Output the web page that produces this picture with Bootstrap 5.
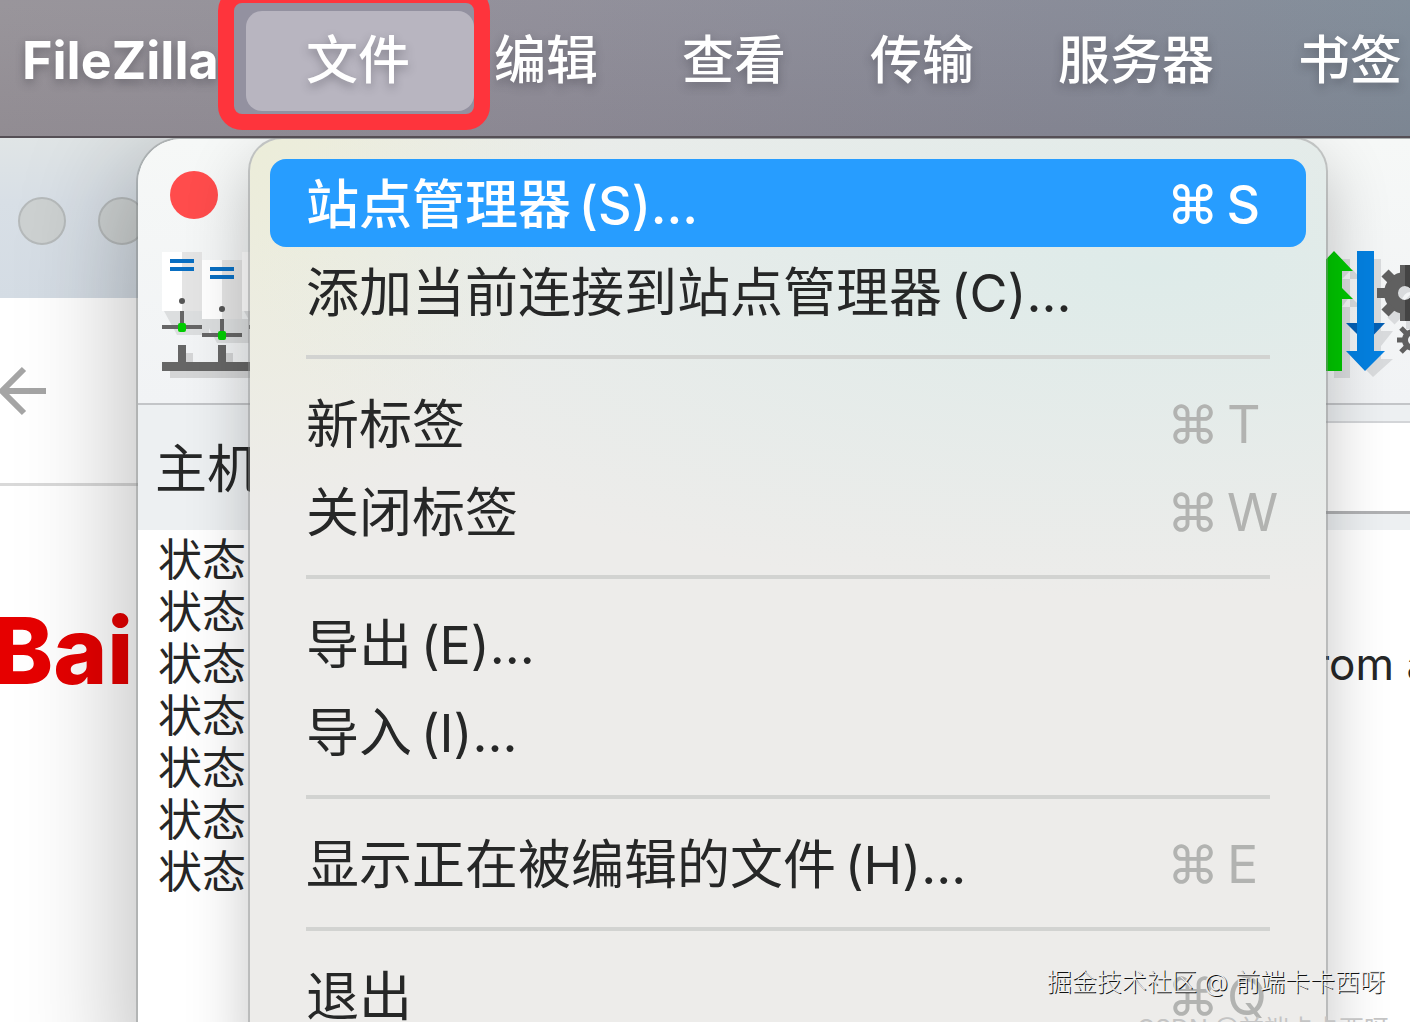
<!DOCTYPE html>
<html lang="zh-CN">
<head>
<meta charset="utf-8">
<meta name="viewport" content="width=device-width, initial-scale=1">
<title>FileZilla</title>
<link href="https://cdn.jsdelivr.net/npm/bootstrap@5.3.0/dist/css/bootstrap.min.css" rel="stylesheet">
<style>
body{font-family:Inter,"Noto Sans CJK SC",sans-serif;color:#262727;background:#fff}
.desk{height:100vh}
.menubar{height:138px;padding:0 0 14px 22px;background:linear-gradient(180deg,rgba(255,255,255,.03),rgba(90,70,80,.08)),linear-gradient(90deg,#969298,#8f8d98 38%,#868996 75%,#7f8b98);border-bottom:2px solid #554f55;z-index:5}
.menubar a{color:#fff;font-size:52px;line-height:78px;font-weight:500;text-shadow:0 4px 10px rgba(40,40,50,.35);white-space:nowrap;text-decoration:none}
.bar-items{gap:84px}
.menubar .app-name{font-weight:700;width:284px;flex:none}
.menubar .picked{position:relative;z-index:0}
.picked::before{content:"";position:absolute;z-index:-1;left:-60px;right:-64px;top:-11px;height:100px;border-radius:16px;background:#b8b5c0}
.marker{position:absolute;z-index:-2;left:-88px;right:-80px;top:-35px;height:143px;border:16px solid #fe343c;border-radius:24px;background:#9391a0;display:block}
.stage{z-index:1}
.web-win{position:absolute;inset:0;background:#fff}
.web-head{height:160px;padding:59px 0 0 18px;gap:32px;background:linear-gradient(180deg,#e0e5e6,#d8dfe6 40%,#d4dce4)}
.dot{width:48px;height:48px;border-radius:50%;background:#cdd1d1;border:2px solid #b6babb}
.dot-close{background:#ff4c4c;border:0}
.web-tools{height:188px;border-bottom:3px solid #d9d9d9}
.web-logo{color:#e60000;font-size:92px;font-weight:800;line-height:90px;margin-left:-8px;padding-top:120px}
.fz-win{position:absolute;left:138px;right:-80px;top:1px;bottom:-40px;border-radius:44px 0 0 0;background:#fff;box-shadow:0 0 0 2px rgba(120,125,125,.4),0 30px 110px 10px rgba(0,0,0,.27);overflow:hidden}
.fz-tools{height:266px;padding:32px 0 0 24px;background:linear-gradient(180deg,#f6f8f7,#f1f3f5);border-bottom:2px solid #c3c5c8}
.fz-icons{margin-top:32px;padding-right:30px}
.fz-host{height:125px;padding-left:17px;background:#edf0f2;gap:30px}
.fz-host label{font-size:52px;white-space:nowrap;padding-top:4px}
.fz-host input{height:93px;border:2px solid #d3d5d8;border-bottom:3px solid #b0b1b3;background:#fff;min-width:0}
.fz-log{padding:4px 0 0 20px;font-size:44px;line-height:52px;list-style:none;margin:0;white-space:nowrap}
.fz-log .msg{margin-left:1051px}
.drop{position:absolute;left:250px;top:1px;width:1076px;padding:20px;border-radius:32px 32px 0 0;background:radial-gradient(ellipse 900px 330px at 900px 130px,#deebe9,rgba(222,235,233,0) 100%),radial-gradient(ellipse 360px 380px at 0 0,#ecedd9,rgba(236,235,224,0) 100%),#edecea;box-shadow:0 0 0 2px rgba(140,142,142,.45),0 24px 64px rgba(0,0,0,.24);z-index:2}
.entry{height:88px;padding:4px 26px 0 36px;border:0;border-radius:16px;background:transparent;color:#262727;font-size:53px;line-height:80px;text-align:left;white-space:nowrap}
.entry.chosen{background:#279dff;color:#fff;font-weight:500}
.latin{font-size:52px;margin-left:-6px}
.entry .keys{width:113px;color:#b2b3b1;font-size:52px;gap:8px;font-weight:400}
.entry.chosen .keys{color:#fff;font-weight:500}
.rule{height:4px;margin:20px 36px;border:0;background:#d2d3d1;opacity:1}
.credit{position:absolute;font-size:25px;line-height:36px;white-space:nowrap;z-index:4}
.credit-a{right:25px;bottom:22px;color:#eee;font-weight:300;text-shadow:1px 1px 0 #111}
.credit-b{right:21px;bottom:-25px;color:#c4c4c4}
</style>
</head>
<body>
<div class="desk d-flex flex-column overflow-hidden position-relative">
<nav class="menubar d-flex align-items-center flex-shrink-0 position-relative" aria-label="菜单栏">
<a href="#" class="app-name">FileZilla</a>
<div class="bar-items d-flex">
<a href="#" class="picked">文件<span class="marker"></span></a><a href="#">编辑</a><a href="#">查看</a><a href="#">传输</a><a href="#">服务器</a><a href="#">书签</a>
</div>
</nav>
<main class="stage flex-grow-1 position-relative">
<section class="web-win">
<div class="web-head d-flex"><span class="dot"></span><span class="dot"></span></div>
<div class="web-tools d-flex align-items-center"><svg width="48" height="50" viewBox="0 0 48 50" fill="none" stroke="#a5a5a5" stroke-width="6"><path d="M46 25H3M24 3L2 25L24 47"/></svg></div>
<div class="web-logo">Bai</div>
</section>
<section class="fz-win">
<div class="fz-tools">
<div class="ms-2 dot dot-close"></div>
<div class="fz-icons d-flex justify-content-between">
<svg width="130" height="130" viewBox="1 0 130 130">
<defs><g id="server">
<path d="M3 60H48V84H16Z" fill="#dcdedf"/>
<path d="M1 1H21V60H1Z" fill="#fff"/><path d="M21 1H41V60H21Z" fill="#e4e4e4"/>
<path d="M9 8H33V12H9ZM9 16H33V20H9Z" fill="#0a6fc2"/>
<circle cx="21" cy="50" r="3" fill="#555"/>
<path d="M19 60H23V74H41V78H1V74H19Z" fill="#666"/>
<rect x="17" y="72" width="8" height="9" rx="2" fill="#0c0"/>
</g></defs>
<path d="M9 120H130V127H9ZM25 102H32V112H25ZM65 102H72V112H65Z" fill="#d4d5d6"/>
<use href="#server"/><use href="#server" x="80"/><use href="#server" x="40" y="8"/>
<path d="M1 111H17V94H25V111H57V94H65V111H97V94H105V111H130V120H1Z" fill="#666"/>
</svg>
<svg width="150" height="130" viewBox="0 0 150 130">
<g fill="#d9dbdd"><path d="M24 8H40V127H24ZM32 28H51L42 18ZM32 56H51L40 45ZM55 8H71V80H83L71 95V108H83L63 126L55 118Z"/></g>
<path d="M24 0L43 20H32V37L43 48H32V120H16V48H5L16 37V20H5Z" fill="#00c800"/>
<path d="M36 72H75L56 92Z" fill="#0560b4"/>
<path d="M47 0H64V100H75L55 120L36 100H47Z" fill="#0480e0"/>
<g stroke="#d9dbdd" stroke-width="10" fill="none"><circle cx="101" cy="50" r="14"/><path d="M81 70L121 30M101 70V78"/></g>
<g stroke="#606060" fill="none"><circle cx="95" cy="42" r="14" stroke-width="14"/>
<path d="M95 14V24M95 60V70M67 42H77M113 42H123M75 22L82 29M108 55L115 62M75 62L82 55M108 29L115 22" stroke-width="10"/>
<circle cx="103" cy="89" r="8" stroke-width="6"/>
<path d="M103 73V81M103 97V105M87 89H95M111 89H119M91 77L98 84M91 101L98 94M108 84L115 77M108 94L115 101" stroke-width="5"/></g>
<path d="M95 14H100V22A20 20 0 0 1 100 62V70H95V49A7 7 0 0 0 95 35Z" fill="#444"/>
</svg>
</div>
</div>
<div class="fz-host d-flex align-items-center"><label for="host">主机:</label><input id="host" class="flex-grow-1" type="text"></div>
<ul class="fz-log"><li>状态</li><li>状态</li><li>状态<span class="msg">from a</span></li><li>状态</li><li>状态</li><li>状态</li><li>状态</li></ul>
</section>
<div class="drop d-flex flex-column">
<button class="entry chosen d-flex align-items-center justify-content-between" type="button"><span>站点管理器<span class="latin"> (S)...</span></span><span class="keys d-flex"><span>⌘</span><span>S</span></span></button>
<button class="entry" type="button">添加当前连接到站点管理器<span class="latin"> (C)...</span></button>
<hr class="rule">
<button class="entry d-flex align-items-center justify-content-between" type="button"><span>新标签</span><span class="keys d-flex"><span>⌘</span><span>T</span></span></button>
<button class="entry d-flex align-items-center justify-content-between" type="button"><span>关闭标签</span><span class="keys d-flex"><span>⌘</span><span>W</span></span></button>
<hr class="rule">
<button class="entry" type="button">导出<span class="latin"> (E)...</span></button>
<button class="entry" type="button">导入<span class="latin"> (I)...</span></button>
<hr class="rule">
<button class="entry d-flex align-items-center justify-content-between" type="button"><span>显示正在被编辑的文件<span class="latin"> (H)...</span></span><span class="keys d-flex"><span>⌘</span><span>E</span></span></button>
<hr class="rule">
<button class="entry d-flex align-items-center justify-content-between" type="button"><span>退出</span><span class="keys d-flex"><span>⌘</span><span>Q</span></span></button>
</div>
</main>
<div class="credit credit-a">掘金技术社区 @ 前端卡卡西呀</div>
<div class="credit credit-b">CSDN @前端卡卡西呀</div>
</div>
<script src="https://cdn.jsdelivr.net/npm/bootstrap@5.3.0/dist/js/bootstrap.bundle.min.js"></script>
</body>
</html>
